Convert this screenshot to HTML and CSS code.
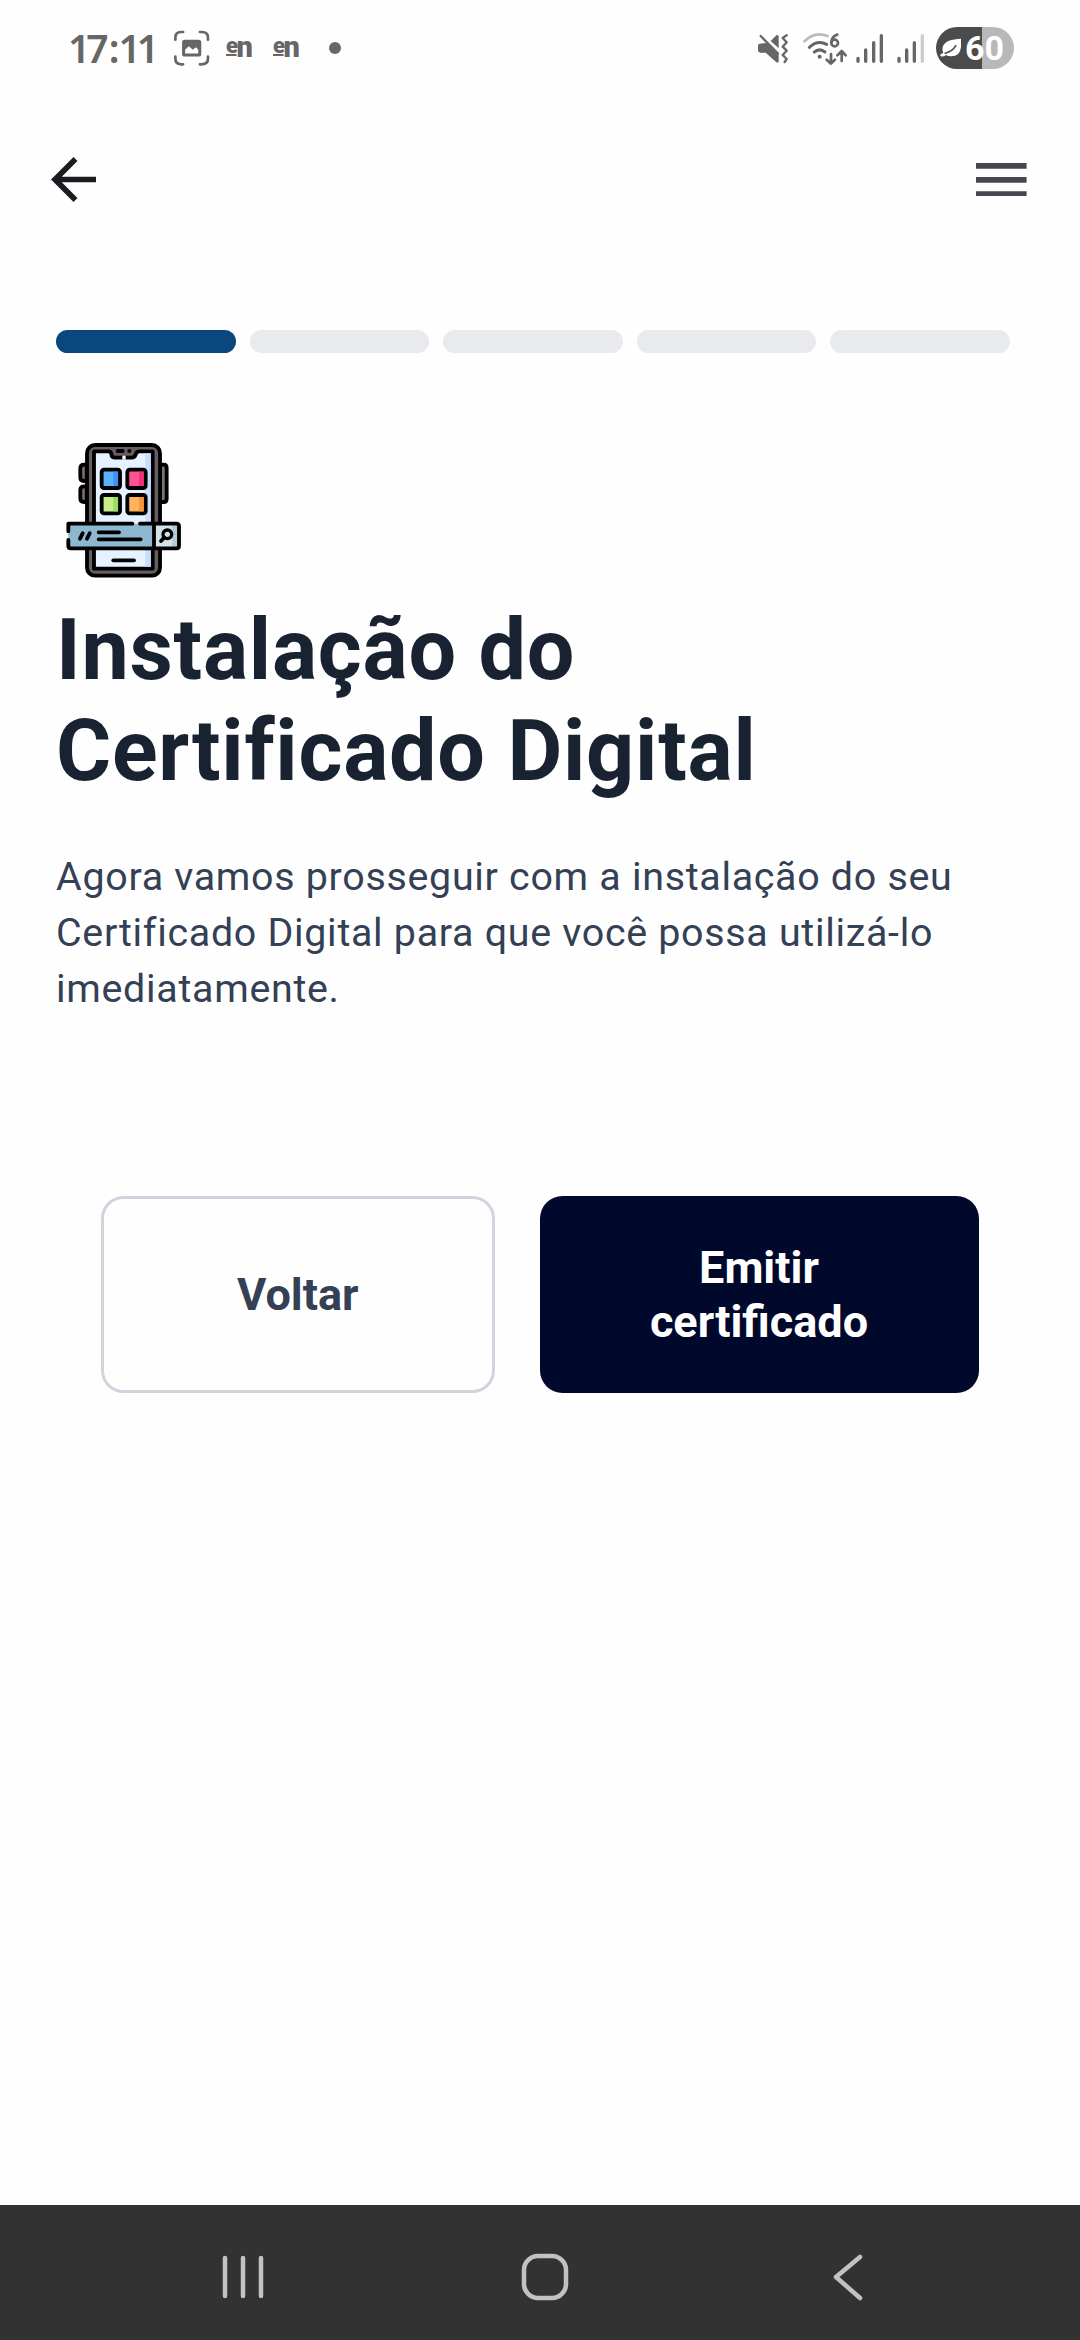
FILE: index.html
```html
<!DOCTYPE html>
<html lang="pt-BR">
<head>
<meta charset="utf-8">
<title>Instalação do Certificado Digital</title>
<link rel="stylesheet" href="styles.css">
</head>
<body>
<div class="screen">
  <div class="status">
    <span class="clock">17<span class="colon">:</span>11</span>
    <svg class="capture" viewBox="366 58 116 116" fill="none" stroke="#666" stroke-width="8" stroke-linecap="round">
      <path d="M376 90V84Q376 67 393 67H399M449 67H455Q473 67 473 84V90M473 140V146Q473 163 455 163H449M399 163H393Q376 163 376 146V140"/>
      <path fill="#666" stroke="none" fill-rule="evenodd" d="M404 90H445Q453 90 453 98V132Q453 140 445 140H404Q396 140 396 132V98Q396 90 404 90ZM405 131H444V119L437 112L428 120L416 109L405 120Z"/>
    </svg>
    <span class="lang"><span class="lang-e">e</span>n</span>
    <span class="lang"><span class="lang-e">e</span>n</span>
    <span class="dot"></span>
    <svg class="indicators" viewBox="50 45 506 132" fill="none" stroke="#666" stroke-width="8" stroke-linecap="round" stroke-linejoin="round">
      <path fill="#666" stroke="none" d="M60 98Q56 100 56 104V118Q56 125 63 125H79L111 154Q118 158 118 150V133L81 96ZM94 90L111 73Q118 69 118 77V112Z"/>
      <path stroke-width="7" d="M64 75L116 128M142 73L130 81L142 94L130 107L142 119L130 132L142 144L136 153"/>
      <path stroke="#bbb" d="M195 91Q226 60 265 75"/>
      <path d="M210 109Q235 85 262 100M225 123Q241 110 257 123" stroke-width="9"/>
      <circle cx="241" cy="137" r="6" fill="#666" stroke="none"/>
      <path stroke-width="8" d="M275 129V157M262 146L275 158L287 146M307 150V121M294 133L307 120L319 133"/>
      <circle cx="286" cy="96" r="10"/><path d="M294 71Q278 75 276 94" stroke-width="8"/>
      <path stroke-width="10" d="M356 142V151M379 117V151M403 95V151M426 74V151M479 142V151M502 117V151M525 95V151"/>
      <path stroke="#ccc" stroke-width="10" d="M549 74V151"/>
    </svg>
    <span class="battery">
      <svg class="leaf" viewBox="596 82 70 66"><path fill="#fff" d="M663 87V111Q661 140 633 140Q622 140 618 136Q610 142 603 141Q597 138 602 133L609 130Q601 111 617 98Q629 89 663 87Z"/><path d="M615 131Q637 126 647 108" fill="none" stroke="#4b4b4b" stroke-width="5" stroke-linecap="round"/></svg>
      <span class="level">60</span>
    </span>
  </div>

  <header class="appbar">
    <svg class="back" viewBox="4 4 16 16"><path fill="#1d1b20" d="M20 11H7.83l5.59-5.59L12 4l-8 8 8 8 1.41-1.41L7.83 13H20z"/></svg>
    <svg class="menu" viewBox="3 6 18 12"><path fill="#49454f" d="M3 18h18v-2H3zM3 13h18v-2H3zM3 6v2h18V6z"/></svg>
  </header>

  <main class="content">
    <div class="steps">
      <span class="step step-active"></span><span class="step"></span><span class="step"></span><span class="step"></span><span class="step"></span>
    </div>

    <svg class="phone" viewBox="18 0 432 480" stroke="#000" stroke-width="11.5" stroke-linecap="round" stroke-linejoin="round">
      <path fill="#7a7478" d="M110 104H102Q91 104 91 115V142Q91 153 102 153H110ZM110 169H102Q91 169 91 180V205Q91 216 102 216H110ZM330 104H341Q350 104 350 114V206Q350 216 341 216H330Z"/>
      <rect x="111" y="45" width="219" height="392" rx="24" fill="#655d62"/>
      <path fill="#e6f2ff" d="M132 64H178Q184 66 185 77Q187 83 195 83H244Q254 83 257 74Q259 64 268 64H308V416H132Z"/>
      <path fill="#c7deff" stroke="none" d="M286 70H302V410H286Z"/>
      <path d="M203 63H218"/><circle cx="238" cy="63" r="6" fill="#000" stroke="none"/>
      <path d="M217 83H227" stroke="#f5f9ff" stroke-width="12" stroke-linecap="butt"/>
      <rect x="155" y="119" width="55" height="55" rx="7" fill="#5ab0ff"/><path d="M190 125H204V168H190Z" fill="#3d91f7" stroke="none"/>
      <rect x="232" y="119" width="55" height="55" rx="7" fill="#ff5394"/><path d="M267 125H281V168H267Z" fill="#f42e78" stroke="none"/>
      <rect x="155" y="195" width="55" height="55" rx="7" fill="#c6ed8b"/><path d="M190 201H204V244H190Z" fill="#9bdd63" stroke="none"/>
      <rect x="232" y="195" width="55" height="55" rx="7" fill="#ffb35c"/><path d="M267 201H281V244H267Z" fill="#f99836" stroke="none"/>
      <path d="M190 391H252"/>
      <path fill="#8eb8d0" stroke="none" d="M55 281H312V355H55Z"/>
      <path fill="#d4e1e6" stroke="none" d="M312 281H386V355H312Z"/>
      <path fill="#b2cbd5" stroke="none" d="M367 281H386V355H367Z"/>
      <path fill="none" d="M55 304V281H247M270 281H379Q387 281 387 289V347Q387 355 379 355H63Q55 355 55 347V330M312 281V355"/>
      <path d="M98 310L90 326M119 310L111 326M146 307H207M146 328H272"/>
      <circle cx="352" cy="313" r="13" fill="#d4e1e6" stroke-width="10"/><path d="M342 323L333 333"/>
    </svg>

    <h1 class="title">Instalação do<br>Certificado Digital</h1>
    <p class="text">Agora vamos prosseguir com a instalação do seu<br>Certificado Digital para que você possa utilizá-lo<br>imediatamente.</p>

    <div class="actions">
      <button class="btn btn-outline">Voltar</button>
      <button class="btn btn-primary">Emitir<br>certificado</button>
    </div>
  </main>

  <nav class="navbar">
    <svg class="nav-recents" viewBox="0 0 42 46"><path d="M3 4V42M21 4V42M39 4V42"/></svg>
    <svg class="nav-home" viewBox="0 0 48 48"><rect x="3" y="3" width="42" height="42" rx="14"/></svg>
    <svg class="nav-back" viewBox="0 0 32 48"><path d="M28 4L4 24L28 45"/></svg>
  </nav>
</div>
</body>
</html>
```
FILE: styles.css
```css
* {
  box-sizing: border-box;
}

body {
  margin: 0;
  background: #fefefe;
  font-family: Roboto, "Noto Sans", sans-serif;
}

svg {
  display: block;
  flex: none;
}

.screen {
  display: flex;
  flex-direction: column;
  width: 1080px;
  height: 2340px;
}

/* Status bar */
.status {
  display: flex;
  align-items: center;
  height: 96px;
  padding: 0 66px 0 68px;
  color: #666;
}

.clock {
  width: 104px;
  margin-top: -1px;
  font: 600 39px/46px "Noto Sans", sans-serif;
  letter-spacing: -4px;
  white-space: nowrap;
}

.colon {
  margin: 0 3px 0 4px;
}

.capture {
  width: 39px;
  height: 39px;
}

.lang {
  width: 47px;
  margin-top: -4px;
  font: 900 29px/34px Roboto, sans-serif;
  letter-spacing: -1.5px;
}

.capture + .lang {
  margin-left: 15px;
}

.lang-e {
  font-size: 22px;
  text-decoration: underline;
  text-decoration-thickness: 2px;
  vertical-align: 4px;
}

.dot {
  width: 12px;
  height: 12px;
  margin-left: 9px;
  border-radius: 50%;
  background: #666;
}

.indicators {
  width: 168.7px;
  height: 44px;
  margin-left: auto;
}

.battery {
  display: flex;
  align-items: center;
  width: 78px;
  height: 42px;
  margin-left: 11px;
  padding-left: 3px;
  border-radius: 21px;
  background: linear-gradient(90deg, #4b4b4b 46px, #b8b8b8 46px);
  color: #fff;
}

.leaf {
  width: 23px;
  height: 22px;
}

.level {
  margin-left: 3px;
  font: 700 34px/42px Roboto, sans-serif;
}

/* App bar */
.appbar {
  display: flex;
  align-items: center;
  justify-content: space-between;
  height: 167px;
  padding: 0 53px 0 51px;
}

.back {
  width: 45px;
  height: 45px;
}

.menu {
  width: 50.6px;
  height: 33.8px;
}

/* Page */
.content {
  flex: 1;
  padding: 67px 70.5px 0 56px;
}

.steps {
  display: flex;
  gap: 14px;
  height: 22.5px;
}

.step {
  flex: 1;
  border-radius: 12px;
  background: #e9eaee;
}

.step-active {
  background: #09477e;
}

.phone {
  width: 144px;
  height: 160px;
  margin-top: 77.5px;
}

.title {
  margin: 9.75px 0 0;
  color: #182230;
  font-size: 84.4px;
  font-weight: 700;
  line-height: 101.25px;
  letter-spacing: 0.75px;
}

.text {
  margin: 46.25px 0 0;
  color: #344054;
  font-size: 39.4px;
  line-height: 56.25px;
  letter-spacing: 0.7px;
}

.actions {
  display: grid;
  grid-template-columns: 393.5px 439px;
  gap: 45px;
  height: 197px;
  margin: 178.75px 0 0 45px;
}

.btn {
  padding: 0;
  border: none;
  border-radius: 22.5px;
  font: 700 45px/53.5px Roboto, sans-serif;
}

.btn-outline {
  border: 3px solid #d0d5dd;
  background: transparent;
  color: #344054;
}

.btn-primary {
  background: #00082b;
  color: #fff;
}

/* System navigation */
.navbar {
  display: flex;
  align-items: center;
  height: 135px;
  padding: 8px 0 0 222px;
  background: #323232;
  fill: none;
  stroke: #c2c2c2;
  stroke-width: 4.5;
  stroke-linecap: round;
  stroke-linejoin: round;
}

.nav-recents {
  width: 42px;
  height: 46px;
}

.nav-home {
  width: 48px;
  height: 48px;
  margin-left: 257px;
}

.nav-back {
  width: 32px;
  height: 48px;
  margin-left: 263px;
}
```
